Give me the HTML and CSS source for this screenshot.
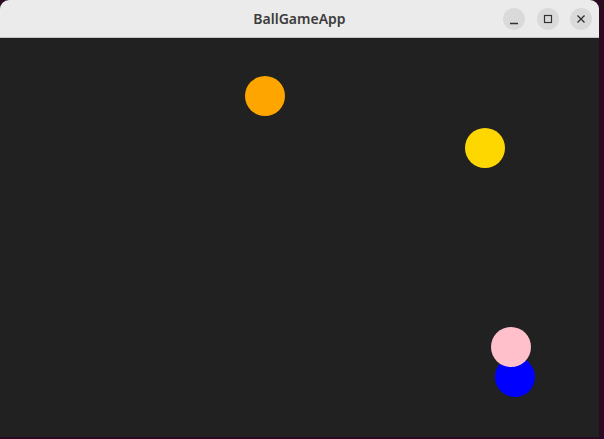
FILE: index.html
```html
<!DOCTYPE html>
<html>
<head>
<meta charset="utf-8">
<link rel="stylesheet" href="styles.css">
</head>
<body>
<div class="window">
  <div class="titlebar">
    <div class="title">BallGameApp</div>
    <div class="controls">
      <div class="btn"><svg width="22" height="22" viewBox="0 0 22 22"><path d="M7 15.5h8" stroke="#333" stroke-width="1.4"/></svg></div>
      <div class="btn"><svg width="22" height="22" viewBox="0 0 22 22"><rect x="7.5" y="7.5" width="7" height="7" fill="none" stroke="#333" stroke-width="1.2"/></svg></div>
      <div class="btn"><svg width="22" height="22" viewBox="0 0 22 22"><path d="M7.5 7.5l7 7M14.5 7.5l-7 7" stroke="#333" stroke-width="1.4"/></svg></div>
    </div>
  </div>
  <div class="canvas">
    <div class="ball orange"></div>
    <div class="ball yellow"></div>
    <div class="ball blue"></div>
    <div class="ball pink"></div>
  </div>
</div>
</body>
</html>
```
FILE: styles.css
```css
html, body {
  margin: 0;
  padding: 0;
  background: #2c0a22;
  width: 604px;
  height: 439px;
  overflow: hidden;
}
.window {
  width: 599px;
  height: 437px;
  border-radius: 9px 9px 0 0;
  overflow: hidden;
  display: flex;
  flex-direction: column;
  background: #212121;
}
.titlebar {
  height: 37px;
  flex: none;
  background: #ebebeb;
  border-bottom: 1px solid #c4c4c4;
  position: relative;
  display: flex;
  align-items: center;
  justify-content: flex-end;
  padding-right: 7px;
}
.title {
  position: absolute;
  left: 0;
  right: 0;
  top: 0;
  line-height: 37px;
  text-align: center;
  font-family: "Noto Sans", sans-serif;
  font-weight: 600;
  font-size: 14px;
  color: #3c3c3c;
}
.controls {
  display: flex;
  gap: 11.5px;
  position: relative;
  margin-top: 1px;
}
.btn {
  width: 22px;
  height: 22px;
  border-radius: 50%;
  background: #dadada;
}
.btn svg { display: block; }
.canvas {
  flex: 1;
  position: relative;
  background: #212121;
}
.ball {
  position: absolute;
  width: 40px;
  height: 40px;
  border-radius: 50%;
}
.orange { background: #ffa500; left: 245px; top: 38px; }
.yellow { background: #ffd700; left: 465px; top: 90px; }
.blue { background: #0000ff; left: 495px; top: 319px; }
.pink { background: #ffc0cb; left: 491px; top: 289px; }
```
